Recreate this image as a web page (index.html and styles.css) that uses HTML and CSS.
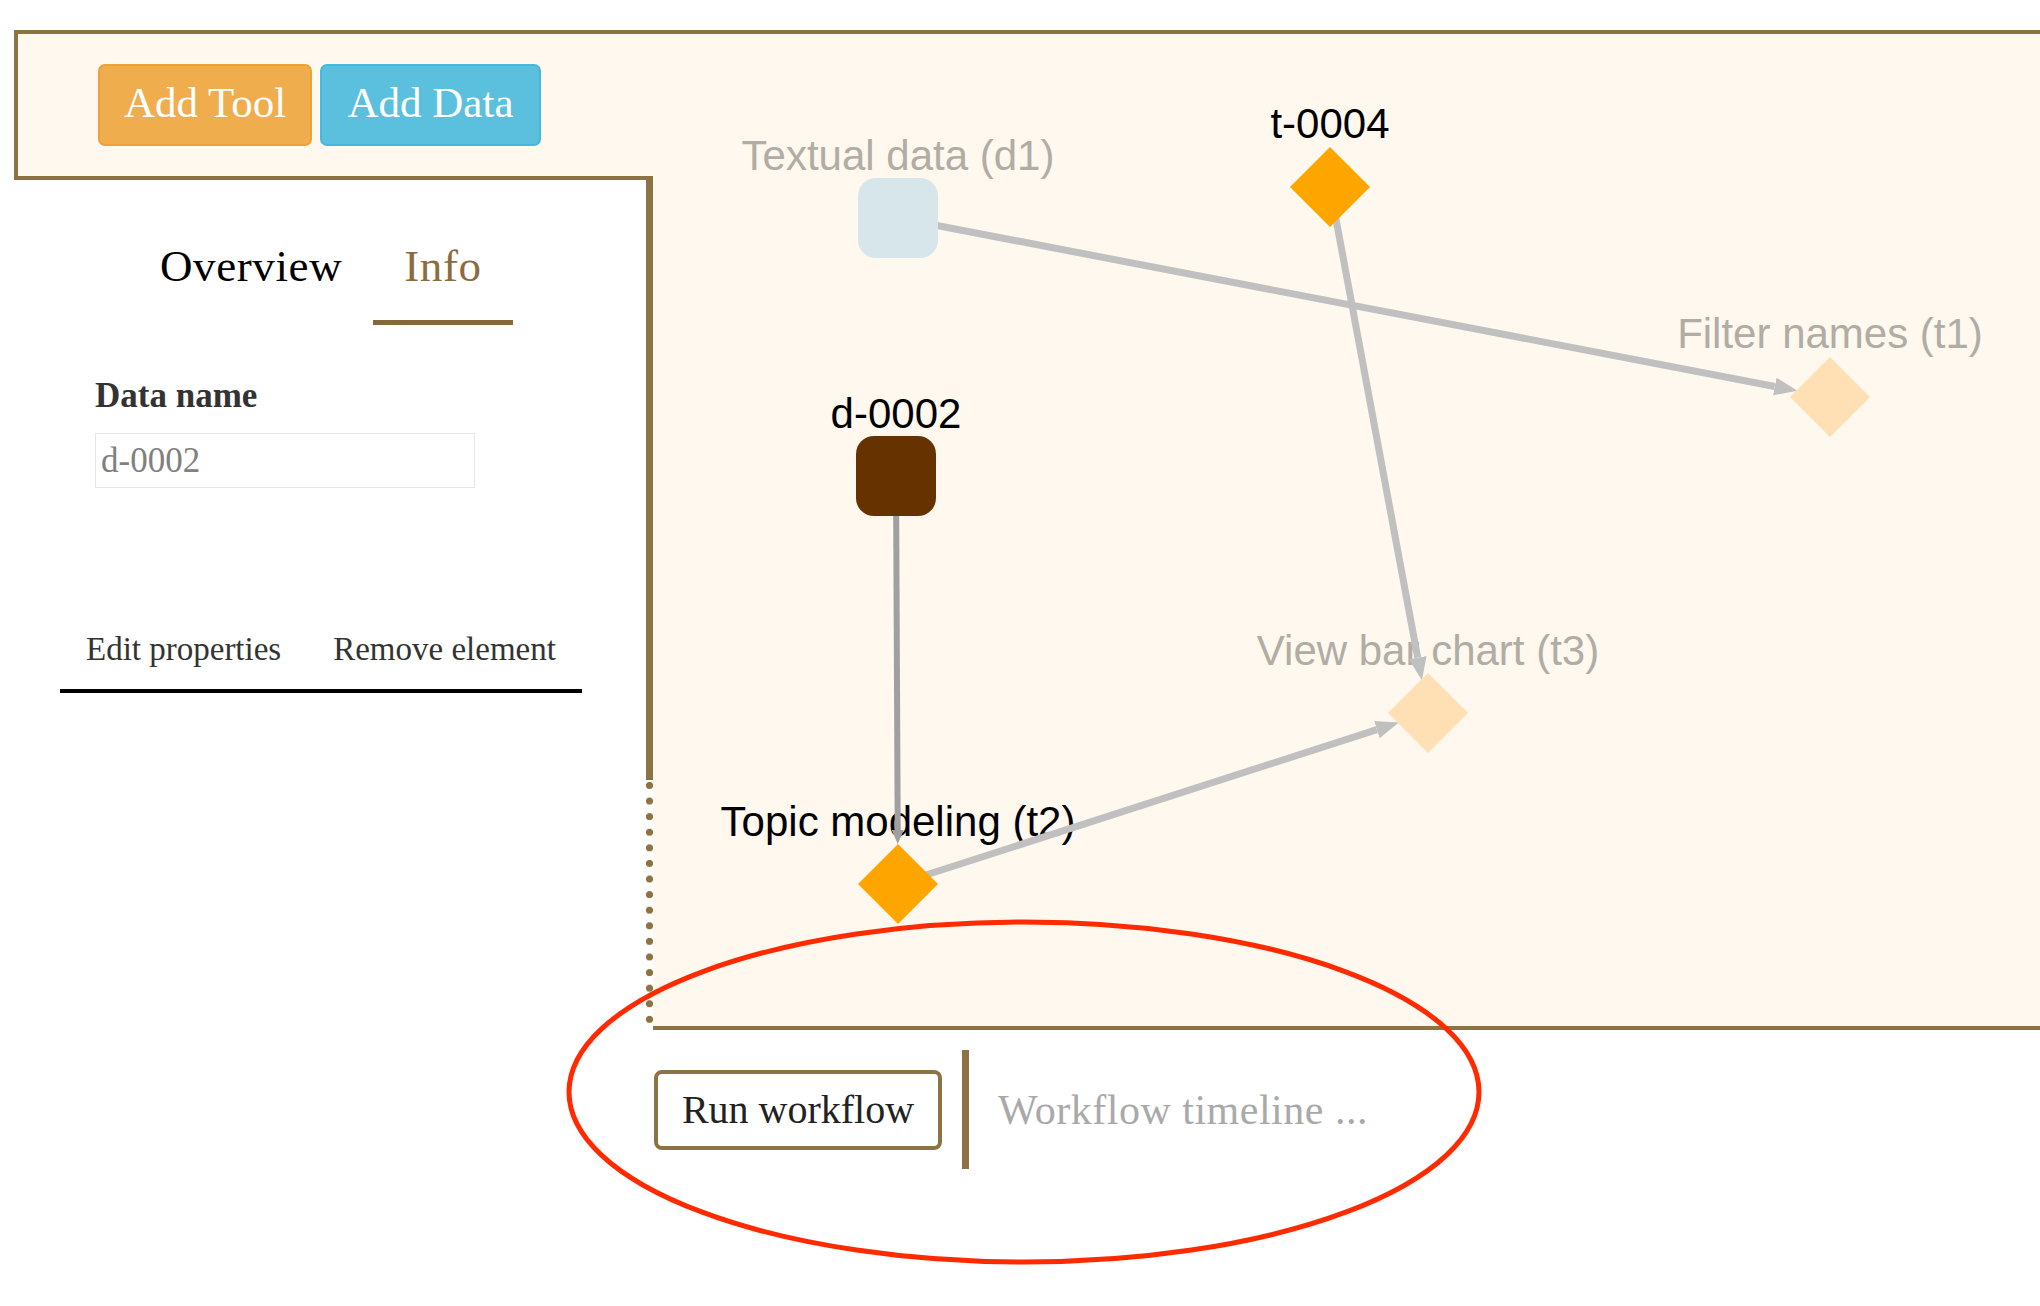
FILE: index.html
```html
<!DOCTYPE html>
<html lang="en">
<head>
<meta charset="utf-8">
<title>Workflow editor</title>
<link rel="stylesheet" href="styles.css">
</head>
<body>
<div class="workspace">
  <svg class="graph" viewBox="18 34 2022 992" xmlns="http://www.w3.org/2000/svg">
    <defs>
      <marker id="arrow" markerUnits="userSpaceOnUse" markerWidth="24" markerHeight="20" refX="0" refY="10" orient="auto" viewBox="0 0 24 20">
        <path d="M0,1 L23,10 L0,19 Z" fill="#c0c0c0"/>
      </marker>
      <marker id="arrow-dark" markerUnits="userSpaceOnUse" markerWidth="14" markerHeight="12" refX="0" refY="6" orient="auto" viewBox="0 0 14 12">
        <path d="M0,0 L14,6 L0,12 Z" fill="#a0a0a0"/>
      </marker>
    </defs>
    <g class="labels">
      <text class="lbl faded" x="898" y="170">Textual data (d1)</text>
      <text class="lbl" x="1330" y="138">t-0004</text>
      <text class="lbl faded" x="1830" y="348">Filter names (t1)</text>
      <text class="lbl" x="896" y="428">d-0002</text>
      <text class="lbl faded" x="1428" y="665">View bar chart (t3)</text>
      <text class="lbl" x="898" y="836">Topic modeling (t2)</text>
    </g>
    <g class="edges">
      <line class="edge" x1="898" y1="218" x2="1774.8" y2="386.5" marker-end="url(#arrow)"/>
      <line class="edge" x1="1330" y1="187" x2="1417.7" y2="657.7" marker-end="url(#arrow)"/>
      <line class="edge" x1="898" y1="884" x2="1376.9" y2="729.6" marker-end="url(#arrow)"/>
      <line class="edge dark" x1="896" y1="476" x2="897.7" y2="830" marker-end="url(#arrow-dark)"/>
    </g>
    <g class="nodes">
      <rect class="data faded-data" x="858" y="178" width="80" height="80" rx="18"/>
      <rect class="data selected" x="856" y="436" width="80" height="80" rx="18"/>
      <polygon class="tool" points="1330,147 1370,187 1330,227 1290,187"/>
      <polygon class="tool faded-tool" points="1830,357 1870,397 1830,437 1790,397"/>
      <polygon class="tool faded-tool" points="1428,673 1468,713 1428,753 1388,713"/>
      <polygon class="tool" points="898,844 938,884 898,924 858,884"/>
    </g>
  </svg>

  <div class="toolbar">
    <button class="btn btn-tool">Add Tool</button>
    <button class="btn btn-data">Add Data</button>
  </div>

  <aside class="sidebar">
    <nav class="tabs">
      <span class="tab">Overview</span>
      <span class="tab active">Info</span>
    </nav>
    <div class="field">
      <label class="field-label">Data name</label>
      <div class="field-input">d-0002</div>
    </div>
    <nav class="actions">
      <span class="action">Edit properties</span>
      <span class="action">Remove element</span>
    </nav>
  </aside>
</div>

<div class="footer">
  <button class="run-btn">Run workflow</button>
  <div class="divider"></div>
  <div class="timeline">Workflow timeline ...</div>
</div>

<svg class="annotation" viewBox="0 0 2040 1306" xmlns="http://www.w3.org/2000/svg">
  <ellipse cx="1024" cy="1092" rx="455" ry="170" fill="none" stroke="#ff2a00" stroke-width="5"/>
</svg>
</body>
</html>
```

FILE: styles.css
```css
html, body {
  margin: 0;
  padding: 0;
}

body {
  width: 2040px;
  height: 1306px;
  overflow: hidden;
  background: #ffffff;
  font-family: "Liberation Serif", "Times New Roman", serif;
  position: relative;
}

.workspace {
  position: relative;
  margin: 30px 0 0 14px;
  height: 992px;
  border: 4px solid #8d7243;
  border-right: 0;
  background: #fef8ee;
}

.graph {
  position: absolute;
  left: 0;
  top: 0;
  width: 2022px;
  height: 992px;
}

.lbl {
  font-family: "Liberation Sans", Arial, sans-serif;
  font-size: 42px;
  fill: #000000;
  text-anchor: middle;
}

.lbl.faded {
  fill: #b1aca4;
}

.edge {
  stroke: #c0c0c0;
  stroke-width: 7;
}

.edge.dark {
  stroke: #a0a0a0;
  stroke-width: 6;
}

.data.selected {
  fill: #663300;
}

.data.faded-data {
  fill: #d7e6ea;
}

.tool {
  fill: #ffa500;
}

.tool.faded-tool {
  fill: #fee0b4;
}

.toolbar {
  position: relative;
  z-index: 1;
  display: flex;
  gap: 8px;
  padding: 30px 0 0 80px;
}

.btn {
  height: 82px;
  border-radius: 7px;
  border: 2px solid;
  color: #ffffff;
  font-family: "Liberation Serif", "Times New Roman", serif;
  font-size: 43px;
  padding: 0 0 5px 0;
  text-align: center;
}

.btn-tool {
  width: 214px;
  background: #f0ad4e;
  border-color: #eea236;
}

.btn-data {
  width: 221px;
  background: #5bc0de;
  border-color: #46b8da;
}

.sidebar {
  position: absolute;
  z-index: 2;
  left: -4px;
  top: 142px;
  bottom: -4px;
  width: 632px;
  background: #ffffff;
  border-top: 4px solid #8d7243;
  border-right: 7px solid #8d7243;
  color: #333333;
}

.sidebar::after {
  content: "";
  position: absolute;
  right: -7px;
  bottom: 0;
  width: 7px;
  height: 250px;
  background-color: #ffffff;
  background-image: radial-gradient(circle at 3.5px 3.5px, #8d7243 3.3px, rgba(141, 114, 67, 0) 3.9px);
  background-size: 7px 15.6px;
  background-position: 0 2px;
}

.tabs {
  display: flex;
  margin: 60px 0 0 115px;
}

.tab {
  padding: 0 31px 28px;
  font-size: 45px;
  line-height: 52px;
  letter-spacing: 0.6px;
  color: #000000;
  border-bottom: 5px solid transparent;
}

.tab.active {
  color: #8b6c3e;
  border-bottom-color: #85693a;
}

.field {
  margin: 51px 0 0 81px;
}

.field-label {
  display: block;
  font-weight: bold;
  font-size: 35px;
  line-height: 40px;
  color: #333333;
}

.field-input {
  box-sizing: border-box;
  margin-top: 17px;
  width: 380px;
  height: 55px;
  border: 1px solid #e6e6e6;
  padding: 0 5px;
  font-size: 35px;
  line-height: 53px;
  color: #808080;
}

.actions {
  display: inline-flex;
  margin: 141px 0 0 46px;
  border-bottom: 4px solid #000000;
}

.action {
  padding: 0 26px 20px;
  font-size: 33px;
  line-height: 40px;
  color: #333333;
}

.footer {
  display: flex;
  align-items: center;
  margin-left: 654px;
  padding-top: 20px;
}

.run-btn {
  box-sizing: border-box;
  width: 288px;
  height: 80px;
  border: 4px solid #8d7243;
  border-radius: 8px;
  background: #ffffff;
  color: #222222;
  font-family: "Liberation Serif", "Times New Roman", serif;
  font-size: 40px;
  padding: 0;
}

.divider {
  width: 7px;
  height: 119px;
  margin-left: 20px;
  background: #8d7243;
}

.timeline {
  margin-left: 29px;
  font-size: 42px;
  letter-spacing: 0.5px;
  color: #a9a9a9;
}

.annotation {
  position: absolute;
  z-index: 10;
  left: 0;
  top: 0;
  width: 2040px;
  height: 1306px;
  pointer-events: none;
}
```
